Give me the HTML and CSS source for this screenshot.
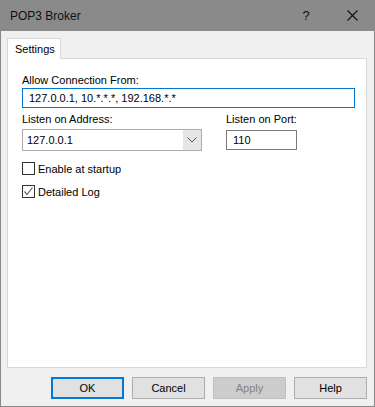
FILE: index.html
```html
<!DOCTYPE html>
<html lang="en">
<head>
    <meta charset="UTF-8">
    <title>POP3 Broker</title>
    <link rel="stylesheet" href="styles.css">
</head>
<body>
    <div class="window">
        <!-- Title bar -->
        <div class="titlebar">
            <span class="title">POP3 Broker</span>
            <span class="caption-btn help-btn">?</span>
            <span class="caption-btn close-btn">
                <svg width="11" height="11" viewBox="0 0 11 11">
                    <path d="M0.5 0.5 L10.5 10.5 M10.5 0.5 L0.5 10.5" stroke="#111" stroke-width="1.1" fill="none"/>
                </svg>
            </span>
        </div>

        <div class="client">
            <div class="tabs">
                <div class="tab active">Settings</div>
            </div>

            <div class="panel">
                <label class="field-label">Allow Connection From:</label>
                <div class="textbox focused">127.0.0.1, 10.*.*.*, 192.168.*.*</div>

                <div class="listen-row">
                    <div class="col-address">
                        <label class="field-label">Listen on Address:</label>
                        <div class="combo">
                            <span class="combo-text">127.0.0.1</span>
                            <span class="combo-arrow">
                                <svg width="10" height="6" viewBox="0 0 10 6">
                                    <path d="M0.5 0.5 L5 5 L9.5 0.5" stroke="#555" stroke-width="1" fill="none"/>
                                </svg>
                            </span>
                        </div>
                    </div>
                    <div class="col-port">
                        <label class="field-label">Listen on Port:</label>
                        <div class="textbox port">110</div>
                    </div>
                </div>

                <div class="check-row">
                    <span class="checkbox"></span>
                    <span>Enable at startup</span>
                </div>
                <div class="check-row second">
                    <span class="checkbox">
                        <svg width="11" height="11" viewBox="0 0 11 11">
                            <path d="M1.5 5.5 L4 8.5 L9.5 1.5" stroke="#666" stroke-width="1.2" fill="none"/>
                        </svg>
                    </span>
                    <span>Detailed Log</span>
                </div>
            </div>

            <!-- Dialog buttons -->
            <div class="buttons">
                <div class="btn default">OK</div>
                <div class="btn">Cancel</div>
                <div class="btn disabled">Apply</div>
                <div class="btn">Help</div>
            </div>
        </div>
    </div>
</body>
</html>
```

FILE: styles.css
```css
body {
    margin: 0;
    padding: 0;
    font-family: "Liberation Sans", Arial, sans-serif;
    font-size: 11px;
    color: #000;
    background-color: #f0f0f0;
}

.window {
    width: 375px;
    height: 407px;
    box-sizing: border-box;
    border: 1px solid #888888;
    border-top: none;
    background-color: #f0f0f0;
    display: flex;
    flex-direction: column;
}

.titlebar {
    height: 31px;
    margin: 0 -1px;
    background-color: #8a8a8a;
    display: flex;
    align-items: center;
    padding-left: 10px;
}

.title {
    flex: 1;
    font-size: 12px;
    color: #111;
}

.caption-btn {
    display: flex;
    align-items: center;
    justify-content: center;
    height: 31px;
    color: #111;
}

.help-btn {
    width: 46px;
    font-size: 13px;
}

.close-btn {
    width: 46px;
}

.client {
    flex: 1;
    padding: 7px 7px 0 6px;
}

.tabs {
    display: flex;
    height: 20px;
}

.tab {
    width: 54px;
    height: 21px;
    box-sizing: border-box;
    border: 1px solid #d9d9d9;
    border-bottom: none;
    background-color: #fff;
    padding: 4px 0 0 7px;
    position: relative;
    z-index: 1;
}

.panel {
    height: 310px;
    box-sizing: border-box;
    border: 1px solid #d9d9d9;
    background-color: #fff;
    padding: 14px 11px 0 14px;
}

.field-label {
    display: block;
    height: 15px;
    line-height: 15px;
}

.textbox {
    height: 20px;
    box-sizing: border-box;
    border: 1px solid #7a7a7a;
    background-color: #fff;
    padding: 0 6px;
    line-height: 18px;
}

.textbox.focused {
    border-color: #0078d7;
}

.listen-row {
    display: flex;
    gap: 24px;
    margin-top: 4px;
}

.col-address {
    width: 180px;
}

.col-address .field-label {
    margin-bottom: 2px;
}

.col-port .field-label {
    margin-bottom: 3px;
}

.combo {
    height: 22px;
    box-sizing: border-box;
    border: 1px solid #adadad;
    display: flex;
}

.combo-text {
    flex: 1;
    padding-left: 4px;
    line-height: 20px;
}

.combo-arrow {
    width: 18px;
    background-color: #e5e5e5;
    display: flex;
    align-items: center;
    justify-content: center;
}

.textbox.port {
    width: 71px;
    padding-left: 6px;
}

.check-row {
    display: flex;
    align-items: center;
    height: 13px;
    margin-top: 11px;
    gap: 3px;
}

.check-row.second {
    margin-top: 10px;
}

.checkbox {
    width: 13px;
    height: 13px;
    box-sizing: border-box;
    border: 1px solid #333;
    background-color: #fff;
    display: flex;
    align-items: center;
    justify-content: center;
}

.buttons {
    display: flex;
    justify-content: flex-end;
    gap: 8px;
    padding: 9px 0 0 0;
}

.btn {
    width: 73px;
    height: 22px;
    box-sizing: border-box;
    border: 1px solid #adadad;
    background-color: #e1e1e1;
    text-align: center;
    line-height: 20px;
}

.btn.default {
    border: 2px solid #0078d7;
    line-height: 18px;
}

.btn.disabled {
    background-color: #cccccc;
    border-color: #bfbfbf;
    color: #838383;
}
```
